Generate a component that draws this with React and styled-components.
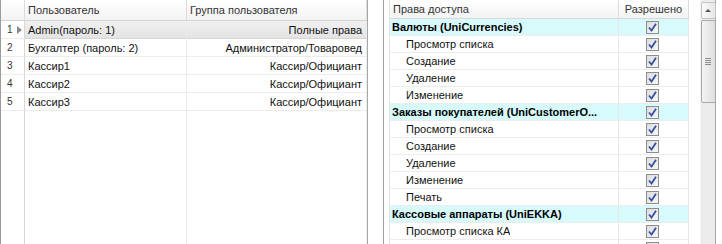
import React from "react";
import styled, { createGlobalStyle, css } from "styled-components";

const GlobalStyle = createGlobalStyle`
  html, body { margin: 0; padding: 0; background: #ffffff; }
  body { font-family: "Liberation Sans", Arial, sans-serif; font-size: 11px; color: #111; }
`;

const Screen = styled.div`
  display: flex;
  width: 722px;
  height: 244px;
  overflow: hidden;
  background: #fff;
`;

/* ---------- Left grid ---------- */
const LeftPanel = styled.div`
  width: 368px;
  height: 244px;
  border-left: 1px solid #9c9c9c;
  border-right: 1px solid #a8a8a8;
  display: grid;
  grid-template-columns: 24px 162px 180px;
  grid-template-rows: 21px repeat(5, 18px) 1fr;
  box-sizing: border-box;
`;

const HeadCell = styled.div`
  display: flex;
  align-items: center;
  padding: 0 3px;
  color: #333;
  background: linear-gradient(#ffffff, #f3f3f3);
  border-bottom: 1px solid #d4d4d4;
  border-right: 1px solid #dcdcdc;
  white-space: nowrap;
  overflow: hidden;
`;

const RowHead = styled.div`
  display: flex;
  align-items: center;
  padding-left: 6px;
  gap: 4px;
  color: ${(p) => p.$color || "#333"};
  font-size: 10px;
  background: #fff;
  border-right: 1px solid #d8d8d8;
  border-bottom: 1px solid #ececec;
`;

const Cell = styled.div`
  display: flex;
  align-items: center;
  justify-content: ${(p) => (p.$right ? "flex-end" : "flex-start")};
  padding: 0 4px 0 3px;
  white-space: nowrap;
  overflow: hidden;
  color: #111;
  border-right: 1px solid #ececec;
  border-bottom: 1px solid #ececec;
  ${(p) =>
    p.$selected &&
    css`
      background: linear-gradient(#f1f1f1, #e3e3e3);
      border-bottom: 1px solid #d6d6d6;
    `}
`;

const Filler = styled.div`
  border-right: 1px solid ${(p) => (p.$dark ? "#d8d8d8" : "#ececec")};
`;

const Arrow = styled.span`
  width: 0;
  height: 0;
  border-top: 4px solid transparent;
  border-bottom: 4px solid transparent;
  border-left: 5px solid #8a8a8a;
`;

/* ---------- Right grid ---------- */
const RightPanel = styled.div`
  margin-left: 15px;
  width: 333px;
  height: 244px;
  border-left: 1px solid #a0a0a0;
  display: flex;
  box-sizing: border-box;
  padding-left: 5px;
`;

const RightGrid = styled.div`
  width: 300px;
  border-left: 1px solid #e4e4e4;
  display: grid;
  grid-template-columns: 229px 70px;
  grid-auto-rows: 17px;
  grid-template-rows: 19px;
  align-content: start;
  height: 244px;
  overflow: hidden;
`;

const RHead = styled(HeadCell)`
  justify-content: ${(p) => (p.$center ? "center" : "flex-start")};
  border-bottom: 1px solid #d8d8d8;
`;

const RCell = styled.div`
  display: flex;
  align-items: center;
  justify-content: ${(p) => (p.$center ? "center" : "flex-start")};
  padding-left: ${(p) => (p.$indent ? "16px" : "2px")};
  padding-right: 4px;
  white-space: nowrap;
  overflow: hidden;
  text-overflow: ellipsis;
  min-width: 0;
  border-right: 1px solid #e8e8e8;
  border-bottom: 1px solid #ececec;
  color: #111;
  ${(p) =>
    p.$group &&
    css`
      background: #d7fafc;
      font-weight: bold;
      color: #000;
    `}
`;

const Label = styled.span`
  overflow: hidden;
  text-overflow: ellipsis;
`;

const Gap = styled.div`
  width: 10px;
`;

const ScrollBar = styled.div`
  width: 16px;
  height: 244px;
  background: #ececec;
  border-left: 1px solid #f4f4f4;
  border-right: 1px solid #a6a6a6;
  display: flex;
  flex-direction: column;
  align-items: center;
  padding-top: 2px;
  box-sizing: border-box;
`;

const ScrollButton = styled.div`
  width: 15px;
  height: 17px;
  border: 1px solid #c4c4c4;
  border-radius: 2px;
  background: linear-gradient(90deg, #fafafa, #e6e6e6);
  box-sizing: border-box;
  display: flex;
  align-items: center;
  justify-content: center;
`;

const UpTriangle = styled.span`
  width: 0;
  height: 0;
  border-left: 3px solid transparent;
  border-right: 3px solid transparent;
  border-bottom: 3px solid #555;
`;

const Thumb = styled.div`
  margin-top: 1px;
  width: 15px;
  height: 83px;
  border: 1px solid #a9a9a9;
  border-radius: 2px;
  background: linear-gradient(90deg, #f4f4f4, #dedede);
  box-sizing: border-box;
  display: flex;
  flex-direction: column;
  align-items: center;
  justify-content: center;
  gap: 1px;
`;

const Grip = styled.span`
  width: 6px;
  height: 1px;
  background: #8c8c8c;
`;

const Box = styled.span`
  width: 13px;
  height: 13px;
  box-sizing: border-box;
  border: 1px solid #8d8d8d;
  background: linear-gradient(135deg, #dcdcdc, #f7f7f7);
  display: flex;
  align-items: center;
  justify-content: center;
`;

const Check = () => (
  <Box>
    <svg width="9" height="9" viewBox="0 0 9 9">
      <path d="M1 4.5 L3.5 7.5 L8 0.8" fill="none" stroke="#34509f" strokeWidth="1.8" />
    </svg>
  </Box>
);

const users = [
  { n: 1, name: "Admin(пароль: 1)", group: "Полные права", selected: true },
  { n: 2, name: "Бухгалтер (пароль: 2)", group: "Администратор/Товаровед" },
  { n: 3, name: "Кассир1", group: "Кассир/Официант" },
  { n: 4, name: "Кассир2", group: "Кассир/Официант" },
  { n: 5, name: "Кассир3", group: "Кассир/Официант" },
];

const rights = [
  { t: "Валюты (UniCurrencies)", g: true },
  { t: "Просмотр списка" },
  { t: "Создание" },
  { t: "Удаление" },
  { t: "Изменение" },
  { t: "Заказы покупателей (UniCustomerO...", g: true },
  { t: "Просмотр списка" },
  { t: "Создание" },
  { t: "Удаление" },
  { t: "Изменение" },
  { t: "Печать" },
  { t: "Кассовые аппараты (UniEKKA)", g: true },
  { t: "Просмотр списка КА" },
  { t: "" },
];

export default function App() {
  return (
    <>
      <GlobalStyle />
      <Screen>
        <LeftPanel>
          <HeadCell />
          <HeadCell>Пользователь</HeadCell>
          <HeadCell>Группа пользователя</HeadCell>
          {users.map((u) => (
            <React.Fragment key={u.n}>
              <RowHead>
                {u.n}
                {u.selected && <Arrow />}
              </RowHead>
              <Cell $selected={u.selected}>{u.name}</Cell>
              <Cell $selected={u.selected} $right>
                {u.group}
              </Cell>
            </React.Fragment>
          ))}
          <Filler $dark />
          <Filler />
          <Filler />
        </LeftPanel>
        <RightPanel>
          <RightGrid>
            <RHead>Права доступа</RHead>
            <RHead $center>Разрешено</RHead>
            {rights.map((r, i) => (
              <React.Fragment key={i}>
                <RCell $group={r.g} $indent={!r.g}>
                  <Label>{r.t}</Label>
                </RCell>
                <RCell $group={r.g} $center>
                  <Check />
                </RCell>
              </React.Fragment>
            ))}
          </RightGrid>
          <Gap />
          <ScrollBar>
            <ScrollButton>
              <UpTriangle />
            </ScrollButton>
            <Thumb>
              <Grip />
              <Grip />
              <Grip />
              <Grip />
            </Thumb>
          </ScrollBar>
        </RightPanel>
      </Screen>
    </>
  );
}
